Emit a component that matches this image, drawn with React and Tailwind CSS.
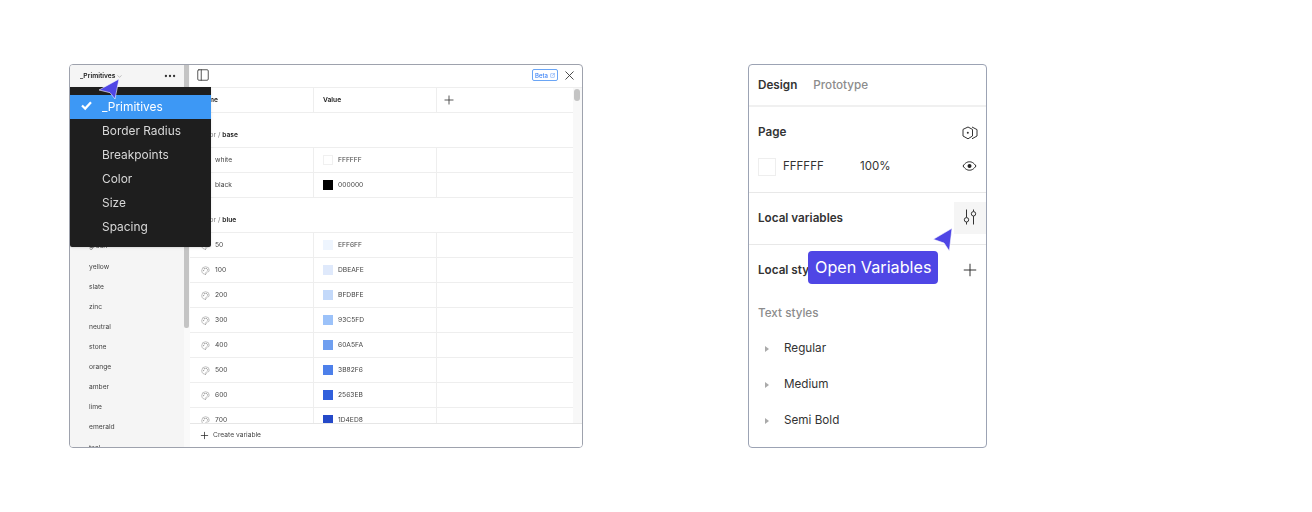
import { ChevronDown, Ellipsis, PanelLeft, X, Plus, Palette, SquareArrowOutUpRight } from 'lucide-react';

const collections = ['_Primitives', 'Border Radius', 'Breakpoints', 'Color', 'Size', 'Spacing'];
const groups = ['green', 'yellow', 'slate', 'zinc', 'neutral', 'stone', 'orange', 'amber', 'lime', 'emerald', 'teal'];
const baseRows = [
    { name: 'white', value: 'FFFFFF', swatch: 'bg-[#ffffff] border border-[#f0f0f0]' },
    { name: 'black', value: '000000', swatch: 'bg-[#000000]' },
];
const blueRows = [
    { name: '50', value: 'EFF6FF', swatch: 'bg-[#eef5fe]' },
    { name: '100', value: 'DBEAFE', swatch: 'bg-[#dfe9fb]' },
    { name: '200', value: 'BFDBFE', swatch: 'bg-[#c3d9fa]' },
    { name: '300', value: '93C5FD', swatch: 'bg-[#9cc2f9]' },
    { name: '400', value: '60A5FA', swatch: 'bg-[#6f9ff0]' },
    { name: '500', value: '3B82F6', swatch: 'bg-[#4d80ea]' },
    { name: '600', value: '2563EB', swatch: 'bg-[#3160dc]' },
    { name: '700', value: '1D4ED8', swatch: 'bg-[#2549c8]' },
];
const textStyles = ['Regular', 'Medium', 'Semi Bold'];

function GroupRow({ name }) {
    return (
        <div className="h-[35px] border-b border-[#eeeeee] flex items-end pb-[7px] pl-[9px] text-[6.7px] leading-[10px] text-[#777777] will-change-transform">
            <span>Color / <span className="font-semibold text-[#222222]">{name}</span></span>
        </div>
    );
}

function VariableRow({ row }) {
    return (
        <div className="h-[25px] shrink-0 border-b border-[#eeeeee] grid grid-cols-[124px_123px_1fr] text-[6.7px] text-[#444444] will-change-transform">
            <div className="flex items-center pl-[11px] gap-[5px] border-r border-[#eeeeee]">
                <Palette size={9} strokeWidth={1.2} className="text-[#777777]" />
                <span className="pt-[1px]">{row.name}</span>
            </div>
            <div className="flex items-center pl-[9px] gap-[5px] border-r border-[#eeeeee]">
                <div className={`w-[10px] h-[10px] ${row.swatch}`} />
                <span className="pt-[1px]">{row.value}</span>
            </div>
            <div />
        </div>
    );
}

function Cursor({ className, points }) {
    return (
        <svg className={className} width="30" height="30" viewBox="0 0 30 30">
            <polygon points={points} fill="#4f46e5" stroke="#ffffff" strokeWidth="0.6" strokeLinejoin="round" />
        </svg>
    );
}

function VariablesWindow() {
    return (
        <div className="relative w-[514px] h-[384px] shrink-0 border border-[#9ea2ad] rounded-[4px] overflow-hidden flex bg-white">
            {/* Collections sidebar */}
            <aside className="w-[120px] shrink-0 flex bg-[#f5f5f5]">
                <div className="w-[114px] shrink-0 overflow-hidden">
                    <div className="h-[22px] pl-[10px] pr-[7px] flex items-center will-change-transform">
                        <span className="text-[6.7px] font-semibold text-[#222222]">_Primitives</span>
                        <ChevronDown size={7} className="ml-[1px] text-[#999999]" />
                        <Ellipsis size={14} strokeWidth={2} className="ml-auto text-[#333333]" />
                    </div>
                    <ul className="pt-[149.4px] pl-[19px] text-[6.7px] text-[#444444] will-change-transform">
                        {groups.map(group => (
                            <li key={group} className="h-[20.12px] flex items-center">{group}</li>
                        ))}
                    </ul>
                </div>
                <div className="w-[6px] bg-[#fafafa]">
                    <div className="w-[5px] h-[263px] rounded-b-[2px] bg-[#c4c4c4]" />
                </div>
            </aside>

            {/* Variables table */}
            <div className="flex-1 min-w-0 flex flex-col">
                <div className="h-[23px] shrink-0 border-b border-[#eeeeee] flex items-center pl-[6px] pr-[5px] pb-[2px]">
                    <PanelLeft size={14} strokeWidth={1.4} className="text-[#333333]" />
                    <div className="ml-auto w-[26px] h-[12px] border border-[#6aa5f5] rounded-[2px] flex items-center justify-center gap-[2px] text-[6px] font-medium text-[#3b82f6] will-change-transform">
                        Beta
                        <SquareArrowOutUpRight size={5} />
                    </div>
                    <X size={15} strokeWidth={1.4} className="ml-[4px] text-[#333333]" />
                </div>
                <div className="flex-1 min-h-0 flex">
                    <div className="w-[383px] shrink-0 overflow-hidden">
                        <div className="h-[25px] border-b border-[#eeeeee] grid grid-cols-[124px_123px_1fr] text-[6.7px] font-semibold text-[#222222] will-change-transform">
                            <div className="flex items-center pl-[9px] border-r border-[#eeeeee]">Name</div>
                            <div className="flex items-center pl-[9px] border-r border-[#eeeeee]">Value</div>
                            <div className="flex items-center pl-[5px]">
                                <Plus size={14} strokeWidth={1.4} className="text-[#333333]" />
                            </div>
                        </div>
                        <GroupRow name="base" />
                        {baseRows.map(row => <VariableRow key={row.name} row={row} />)}
                        <GroupRow name="blue" />
                        {blueRows.map(row => <VariableRow key={row.name} row={row} />)}
                    </div>
                    <div className="flex-1 bg-[#f8f8f8] pt-[1px] pl-[1px]">
                        <div className="w-[6px] h-[12px] rounded-[3px] bg-[#c4c4c4]" />
                    </div>
                </div>
                <div className="h-[24px] shrink-0 border-t border-[#e6e6e6] bg-white flex items-center pl-[9px] gap-[3px] text-[6.7px] text-[#444444] will-change-transform">
                    <Plus size={11} strokeWidth={1.6} className="text-[#222222]" />
                    Create variable
                </div>
            </div>

            {/* Collection dropdown */}
            <div className="absolute left-0 top-[22px] w-[141px] h-[160px] pt-[8px] rounded-b-[2px] bg-[#1e1e1e] shadow-sm">
                {collections.map((item, i) => (
                    <div
                        key={item}
                        className={`h-[24px] flex items-center pl-[32px] text-[11.9px] ${i === 0 ? 'bg-[#3d98f5] text-white' : 'text-[#d8d8d8]'}`}
                    >
                        {item}
                    </div>
                ))}
                <svg className="absolute left-[11px] top-[13px]" width="11" height="11" viewBox="0 0 11 11" fill="none" stroke="#ffffff" strokeWidth="2.2">
                    <path d="M1 5.5 L4.2 8.6 L10 2.2" />
                </svg>
            </div>
            <Cursor className="absolute left-[28px] top-[10px]" points="21,4 1,15 12,17.7 17,24" />
        </div>
    );
}

function DesignPanel() {
    return (
        <div className="relative w-[239px] h-[384px] shrink-0 border border-[#9ca3b4] rounded-[4px] bg-white">
            <div className="h-[42px] border-b-2 border-[#f0f0f0] flex items-center pl-[9px] pt-[1px] gap-[16px] text-[11.7px]">
                <span className="font-semibold text-[#333333]">Design</span>
                <span className="font-medium text-[#8c8c8c]">Prototype</span>
            </div>

            <section className="h-[86px] border-b border-[#e8e8e8] pl-[9px] pr-[8px] pt-[16px]">
                <div className="h-[20px] flex items-center justify-between">
                    <span className="text-[11.7px] font-semibold text-[#333333]">Page</span>
                    <svg className="mb-[1px]" width="16" height="14" viewBox="0 0 16 14" fill="none" stroke="#333333" strokeWidth="1">
                        <path d="M6 1 L10.5 3.4 V10 L6 12.8 L1 10 V3.4 Z" />
                        <path d="M10 1 L15 3.6 V10 L10 12.8" />
                        <circle cx="5.8" cy="6.8" r="1" fill="#333333" stroke="none" />
                    </svg>
                </div>
                <div className="mt-[15px] h-[18px] flex items-center text-[11.5px] text-[#333333]">
                    <div className="w-[18px] h-[18px] border border-[#eeeeee]" />
                    <span className="ml-[7px] w-[77px]">FFFFFF</span>
                    <span>100%</span>
                    <svg className="ml-auto mr-[1px] mb-[2px]" width="15" height="10" viewBox="0 0 15 10" fill="none" stroke="#222222" strokeWidth="1">
                        <path d="M1 5 C3.5 1.5 5.5 0.8 7.5 0.8 C9.5 0.8 11.5 1.5 14 5 C11.5 8.5 9.5 9.2 7.5 9.2 C5.5 9.2 3.5 8.5 1 5 Z" />
                        <circle cx="7.5" cy="5" r="2" fill="#222222" stroke="none" />
                    </svg>
                </div>
            </section>

            <section className="h-[52px] border-b border-[#e8e8e8] pl-[9px] flex items-center justify-between">
                <span className="pt-[1px] text-[11.7px] font-semibold text-[#333333]">Local variables</span>
                <div className="w-[32px] h-[32px] mb-[1px] bg-[#f5f5f5] flex items-center justify-center">
                    <svg className="mb-[3px]" width="14" height="16" viewBox="0 0 14 16" fill="none" stroke="#333333" strokeWidth="1">
                        <path d="M3.5 0.5 V8.5 M3.5 13 V15.5 M10.5 0.5 V2.5 M10.5 7 V15.5" />
                        <circle cx="3.5" cy="10.8" r="2.2" />
                        <circle cx="10.5" cy="4.8" r="2.2" />
                    </svg>
                </div>
            </section>

            <section className="pl-[9px] pr-[6px]">
                <div className="h-[51px] flex items-center justify-between">
                    <span className="text-[11.7px] font-semibold text-[#333333]">Local styles</span>
                    <Plus size={20} strokeWidth={1.1} className="mb-[1px] text-[#222222]" />
                </div>
                <div className="mt-[8px] h-[20px] flex items-center text-[11.7px] font-medium text-[#8c8c8c]">Text styles</div>
                <ul className="mt-[7px]">
                    {textStyles.map(style => (
                        <li key={style} className="h-[36px] flex items-center text-[11.7px] text-[#333333]">
                            <span className="ml-[7px] w-0 h-0 border-y-[3.5px] border-y-transparent border-l-[4px] border-l-[#aaaaaa]" />
                            <span className="ml-[15px]">{style}</span>
                        </li>
                    ))}
                </ul>
            </section>

            {/* Tooltip over the panel */}
            <div className="absolute left-[59px] top-[186px] w-[130px] h-[33px] rounded-[4px] bg-[#4f46e5] flex items-center pl-[7px] text-[16.2px] text-white">
                Open Variables
            </div>
            <Cursor className="absolute left-[182px] top-[162px]" points="21,1.3 2.3,12.3 13,16 18.3,24" />
        </div>
    );
}

export default function App() {
    return (
        <div className="w-[1312px] h-[512px] bg-white pl-[69px] pt-[64px] flex gap-[165px] font-['Inter',sans-serif]">
            <VariablesWindow />
            <DesignPanel />
        </div>
    );
}
